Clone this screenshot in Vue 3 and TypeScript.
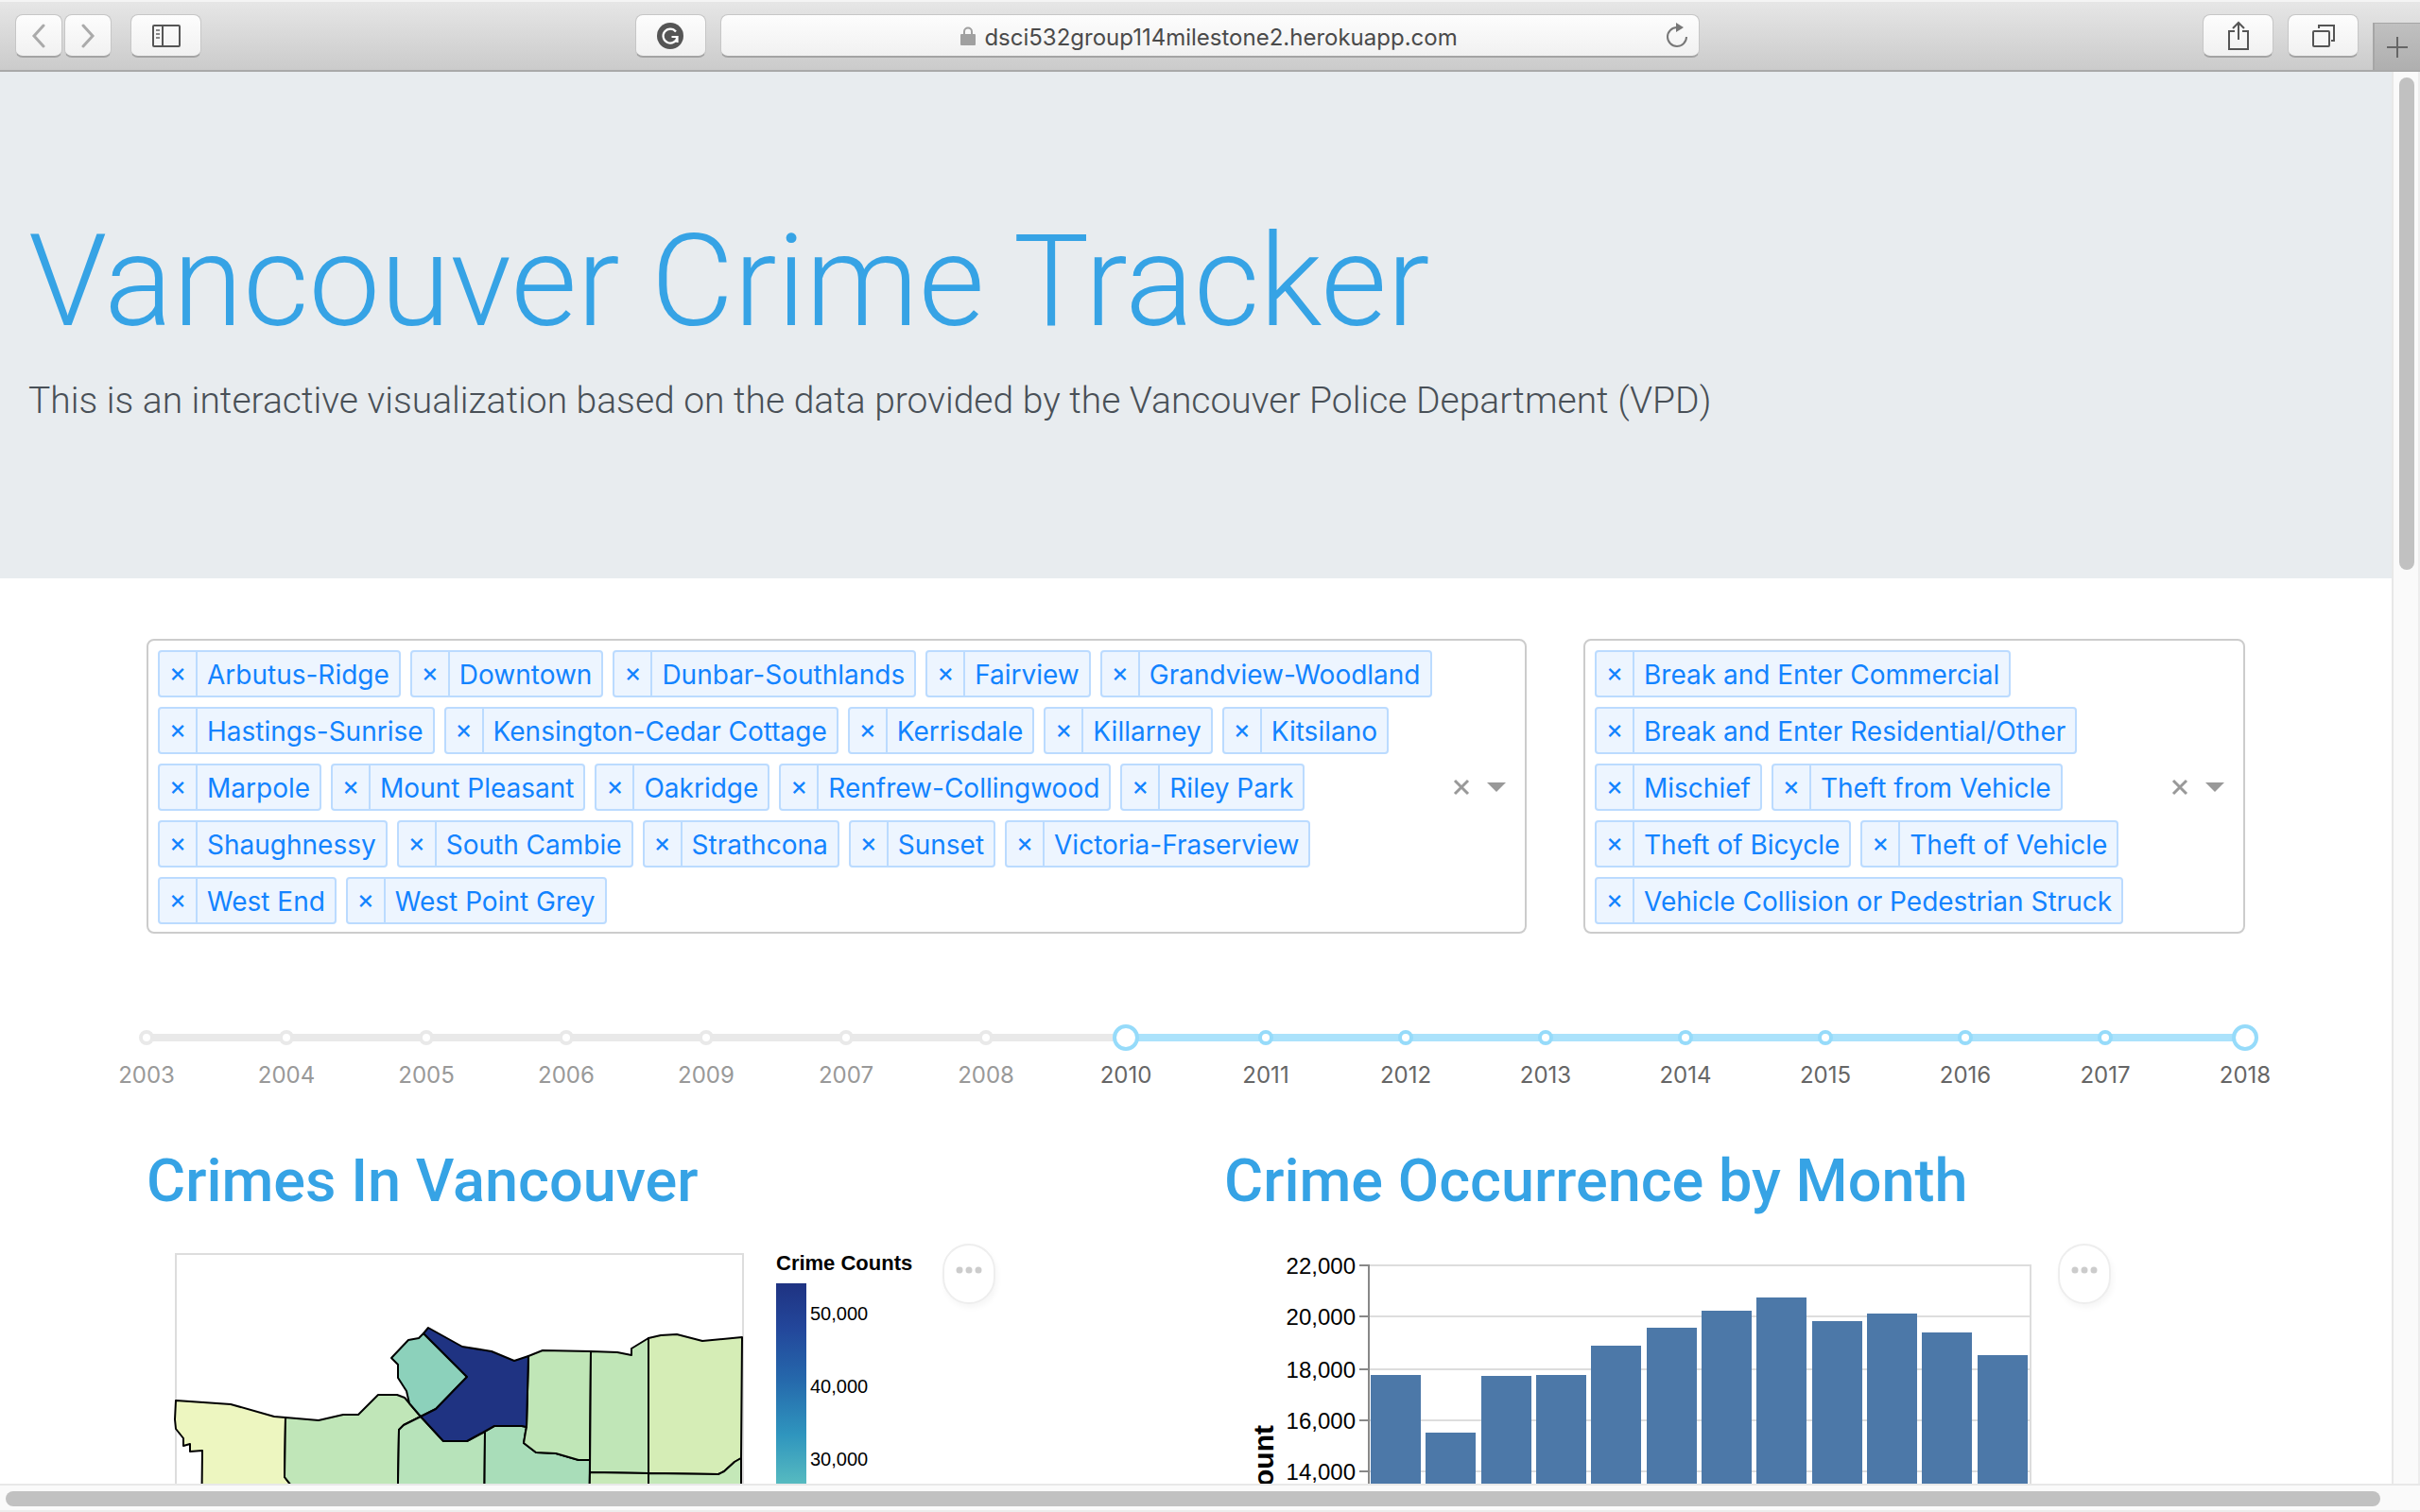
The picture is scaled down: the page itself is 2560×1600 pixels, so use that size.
<script setup lang="ts">
import { computed, ref } from 'vue'

interface Region {
  name: string
  fill: string
  points: string
}

const neighbourhoods = ref<string[]>([
  'Arbutus-Ridge', 'Downtown', 'Dunbar-Southlands', 'Fairview', 'Grandview-Woodland',
  'Hastings-Sunrise', 'Kensington-Cedar Cottage', 'Kerrisdale', 'Killarney', 'Kitsilano',
  'Marpole', 'Mount Pleasant', 'Oakridge', 'Renfrew-Collingwood', 'Riley Park',
  'Shaughnessy', 'South Cambie', 'Strathcona', 'Sunset', 'Victoria-Fraserview',
  'West End', 'West Point Grey',
])

const crimeTypes = ref<string[]>([
  'Break and Enter Commercial', 'Break and Enter Residential/Other', 'Mischief',
  'Theft from Vehicle', 'Theft of Bicycle', 'Theft of Vehicle',
  'Vehicle Collision or Pedestrian Struck',
])

const filters = [
  { id: 'neighbourhoods', label: 'Neighbourhoods', items: neighbourhoods },
  { id: 'crimes', label: 'Crime types', items: crimeTypes },
]

function remove(list: { value: string[] }, item: string) {
  list.value = list.value.filter((x) => x !== item)
}

const years = [2003, 2004, 2005, 2006, 2009, 2007, 2008, 2010, 2011, 2012, 2013, 2014, 2015, 2016, 2017, 2018]
const from = ref(7)
const to = ref(15)
const trackStyle = computed(() => ({
  left: `${(from.value / 15) * 100}%`,
  width: `${((to.value - from.value) / 15) * 100}%`,
}))
const inRange = (i: number) => i >= from.value && i <= to.value

const regions: Region[] = [
  { name: 'West Point Grey', fill: '#edf6c0', points: '1,156 59,160 105,173 117,174 116,237 123,246 123,300 28,300 29,209 16,210 16,202 9,204 9,196 1,186 0,176' },
  { name: 'Kitsilano', fill: '#c0e6b8', points: '117,174 152,177 178,171 194,171 215,150 235,150 243,153 260,173 242,182 237,187 235,300 160,300 123,246 116,237' },
  { name: 'Fairview', fill: '#b7e3ba', points: '260,173 284,199 309,199 328,189 327,300 235,300 237,187 242,182' },
  { name: 'Mount Pleasant', fill: '#a9ddb9', points: '328,189 338,183 367,183 372,184 371,189 369,201 382,211 403,212 427,219 439,219 438,300 327,300' },
  { name: 'Strathcona', fill: '#c0e6b7', points: '374,109 389,103 440,104 439,219 427,219 403,212 382,211 369,201 371,189 372,184' },
  { name: 'Grandview-Woodland', fill: '#c0e6b7', points: '440,104 468,105 483,108 483,101 501,90 501,233 439,232' },
  { name: 'Hastings-Sunrise', fill: '#d5edb6', points: '501,90 514,87 531,86 558,93 600,89 599,217 592,221 581,231 575,234 501,233' },
  { name: 'Kensington-Cedar Cottage', fill: '#c7e9b8', points: '439,232 501,233 501,300 438,300' },
  { name: 'Renfrew-Collingwood', fill: '#c4e8b8', points: '501,233 575,234 581,231 592,221 599,217 599,300 501,300' },
  { name: 'West End', fill: '#8cd1bb', points: '263,85 258,90 247,92 229,111 236,118 236,132 245,146 248,159 260,173 276,165 309,131' },
  { name: 'Downtown', fill: '#1f3382', points: '268,79 304,99 335,104 359,114 374,109 372,184 367,183 338,183 309,199 284,199 260,173 276,165 309,131 263,85' },
]

const legendTicks = [
  { label: '50,000', y: 71 },
  { label: '40,000', y: 148 },
  { label: '30,000', y: 225 },
]

const monthTicks = [
  { label: '22,000', y: 27 },
  { label: '20,000', y: 81 },
  { label: '18,000', y: 137 },
  { label: '16,000', y: 191 },
  { label: '14,000', y: 245 },
]
const barTops = [143, 204, 144, 143, 112, 93, 75, 61, 86, 78, 98, 122]
const barX = (i: number) => 155 + Math.round((i * 175) / 3)
</script>

<template>
  <div class="browser">
    <header class="toolbar">
      <div class="nav">
        <button class="tool narrow" aria-label="Back">
          <svg width="16" height="26" viewBox="0 0 16 26"><path d="M13 2 3 13l10 11" class="chev" /></svg>
        </button>
        <button class="tool narrow" aria-label="Forward">
          <svg width="16" height="26" viewBox="0 0 16 26"><path d="M3 2l10 11L3 24" class="chev" /></svg>
        </button>
      </div>
      <button class="tool sidebar" aria-label="Show sidebar">
        <svg width="30" height="24" viewBox="0 0 30 24" fill="none" stroke="#555" stroke-width="2">
          <rect x="1" y="1" width="28" height="22" rx="1" />
          <path d="M11 1v22" /><path d="M4 6h4M4 10h4M4 14h4" stroke="#888" />
        </svg>
      </button>
      <span class="stretch"></span>
      <button class="tool grammar" aria-label="Grammar check">
        <svg width="28" height="28" viewBox="0 0 28 28">
          <circle cx="14" cy="14" r="14" fill="#555" />
          <path d="M20 9.500A7.500 7.500 0 1 0 21.500 15H15.500M21.500 15v6" fill="none" stroke="#fff" stroke-width="2.200" />
        </svg>
      </button>
      <div class="address">
        <svg width="16" height="20" viewBox="0 0 16 20">
          <path d="M4 9V5.500a4 4 0 0 1 8 0V9" fill="none" stroke="#a0a0a0" stroke-width="2" />
          <rect y="8" width="16" height="12" rx="1" fill="#a0a0a0" />
        </svg>
        <input type="text" value="dsci532group114milestone2.herokuapp.com" aria-label="Address" />
        <button class="reload" aria-label="Reload">
          <svg width="26" height="28" viewBox="0 0 26 28">
            <path d="M13 5A10 10 0 1 0 23 15" fill="none" stroke="#777" stroke-width="2" />
            <path d="M12 0l8 5-8 5z" fill="#777" />
          </svg>
        </button>
      </div>
      <span class="stretch right"></span>
      <button class="tool" aria-label="Share">
        <svg width="24" height="32" viewBox="0 0 24 32" fill="none" stroke="#555" stroke-width="2">
          <path d="M8 11H2v19h20V11h-6M12 20V2M6 8l6-6 6 6" />
        </svg>
      </button>
      <button class="tool tabs" aria-label="Show all tabs">
        <svg width="26" height="26" viewBox="0 0 26 26" fill="none" stroke="#555" stroke-width="2">
          <rect x="2" y="8" width="17" height="16" rx="1" /><path d="M8 5V2h16v16h-3" />
        </svg>
      </button>
      <button class="newtab" aria-label="New tab">
        <svg width="22" height="22" viewBox="0 0 22 22"><path d="M11 0v22M0 11h22" stroke="#666" stroke-width="2" /></svg>
      </button>
    </header>

    <div class="window">
      <main class="page">
        <section class="hero">
          <h1>Vancouver Crime Tracker</h1>
          <p>This is an interactive visualization based on the data provided by the Vancouver Police Department (VPD)</p>
        </section>

        <div class="container">
          <div class="filters">
            <div v-for="f in filters" :key="f.id" class="select" role="group" :aria-label="f.label">
              <ul class="tags">
                <li v-for="item in f.items.value" :key="item" class="tag">
                  <button :aria-label="`Remove ${item}`" @click="remove(f.items, item)">×</button>
                  <span>{{ item }}</span>
                </li>
              </ul>
              <button class="clear" aria-label="Clear all" @click="f.items.value = []">
                <svg width="18" height="18" viewBox="0 0 18 18"><path d="M2 2l14 14M16 2 2 16" stroke="#999" stroke-width="3" /></svg>
              </button>
              <button class="open" aria-label="Open list">
                <svg width="20" height="10" viewBox="0 0 20 10"><path d="M0 0h20L10 10z" fill="#999" /></svg>
              </button>
            </div>
          </div>

          <div class="slider">
            <div class="rail"><div class="track" :style="trackStyle"></div></div>
            <div class="marks">
              <div v-for="(y, i) in years" :key="y" class="mark" :class="{ active: inRange(i) }">
                <i class="dot"></i>
                <span>{{ y }}</span>
              </div>
            </div>
            <input v-model.number="from" type="range" min="0" max="15" aria-label="First year" />
            <input v-model.number="to" type="range" min="0" max="15" aria-label="Last year" />
          </div>

          <div class="charts">
            <section>
              <h2>Crimes In Vancouver</h2>
              <div class="chart">
                <svg width="842" height="400" viewBox="-30 -14 842 400">
                  <rect x="1" y="1" width="600" height="600" fill="#fff" stroke="#ddd" stroke-width="2" />
                  <g stroke="#000" stroke-width="2" stroke-linejoin="round">
                    <polygon v-for="r in regions" :key="r.name" :points="r.points" :fill="r.fill"><title>{{ r.name }}</title></polygon>
                  </g>
                  <defs>
                    <linearGradient id="ramp" x1="0" y1="0" x2="0" y2="1">
                      <stop offset="0" stop-color="#1f3382" />
                      <stop offset="0.120" stop-color="#23479b" />
                      <stop offset="0.250" stop-color="#2567ab" />
                      <stop offset="0.400" stop-color="#2f95be" />
                      <stop offset="0.525" stop-color="#55b9c0" />
                      <stop offset="1" stop-color="#edf8c0" />
                    </linearGradient>
                  </defs>
                  <text x="636" y="18" class="legend-title">Crime Counts</text>
                  <rect x="636" y="32" width="32" height="400" fill="url(#ramp)" />
                  <text v-for="t in legendTicks" :key="t.label" x="672" :y="t.y" class="legend-label">{{ t.label }}</text>
                </svg>
                <button class="more" aria-label="Chart actions">
                  <svg width="28" height="8" viewBox="0 0 28 8" fill="#ccc"><circle cx="4" cy="4" r="3.500" /><circle cx="14" cy="4" r="3.500" /><circle cx="24" cy="4" r="3.500" /></svg>
                </button>
              </div>
            </section>
            <section>
              <h2>Crime Occurrence by Month</h2>
              <div class="chart">
                <svg width="882" height="400" viewBox="0 0 882 400">
                  <rect x="153" y="27" width="700" height="600" fill="#fff" stroke="#ddd" stroke-width="2" />
                  <g v-for="t in monthTicks" :key="t.label">
                    <path :d="`M153 ${t.y}h700`" stroke="#ddd" stroke-width="2" />
                    <path :d="`M143 ${t.y}h10`" stroke="#888" stroke-width="2" />
                    <text x="139" :y="t.y + 9" class="axis-label">{{ t.label }}</text>
                  </g>
                  <rect v-for="(top, i) in barTops" :key="i" :x="barX(i)" :y="top" width="53" :height="600 - top" fill="#4c78a8" />
                  <path d="M153 26v400" stroke="#888" stroke-width="2" />
                  <text transform="translate(52 196) rotate(-90)" class="axis-title">Count</text>
                </svg>
                <button class="more" aria-label="Chart actions">
                  <svg width="28" height="8" viewBox="0 0 28 8" fill="#ccc"><circle cx="4" cy="4" r="3.500" /><circle cx="14" cy="4" r="3.500" /><circle cx="24" cy="4" r="3.500" /></svg>
                </button>
              </div>
            </section>
          </div>
        </div>
      </main>
      <div class="vbar"><div class="vthumb"></div></div>
      <div class="hbar"><div class="hthumb"></div></div>
    </div>
  </div>
</template>

<style>
body {
  margin: 0;
  overflow: hidden;
}
</style>

<style scoped>
* {
  box-sizing: border-box;
}
.browser {
  display: flex;
  flex-direction: column;
  height: 100vh;
  background: #fff;
  color: #212529;
  font-family: Inter, "Liberation Sans", sans-serif;
}
button {
  display: flex;
  align-items: center;
  justify-content: center;
  padding: 0;
  border: 0;
  background: none;
  font: inherit;
}
.toolbar {
  display: flex;
  align-items: center;
  flex: none;
  height: 76px;
  padding-left: 16px;
  border-top: 2px solid #f4f4f4;
  border-bottom: 2px solid #a9a9a9;
  background: linear-gradient(#e6e6e6, #cbcbcb);
}
.nav {
  display: flex;
  gap: 2px;
  margin-right: 20px;
}
.tool,
.address {
  height: 46px;
  border: 1px solid #c6c6c6;
  border-bottom: 2px solid #a4a4a4;
  border-radius: 8px;
  background: linear-gradient(#fdfdfd, #f1f1f1);
}
.tool {
  width: 75px;
}
.tool.narrow {
  width: 50px;
}
.chev {
  fill: none;
  stroke: #aaa;
  stroke-width: 3;
  stroke-linecap: round;
}
.stretch {
  flex: 459;
}
.stretch.right {
  flex: 533;
}
.grammar {
  margin-right: 15px;
}
.address {
  position: relative;
  display: flex;
  align-items: center;
  justify-content: center;
  gap: 8px;
  width: 1036px;
}
.address input {
  width: 504px;
  height: 42px;
  padding: 4px 0 0;
  border: 0;
  outline: 0;
  background: none;
  color: #4a4a4a;
  font: 24px Inter, "Liberation Sans", sans-serif;
  text-align: center;
}
.reload {
  position: absolute;
  right: 10px;
}
.tabs {
  margin-left: 15px;
}
.newtab {
  align-self: flex-end;
  width: 50px;
  height: 50px;
  margin-left: 15px;
  border-top: 1px solid #a6a6a6;
  border-left: 2px solid #a6a6a6;
  background: linear-gradient(#c0c0c0, #afafaf);
}
.window {
  display: grid;
  flex: 1;
  grid-template-columns: minmax(0, 1fr) 30px;
  grid-template-rows: minmax(0, 1fr) 30px;
  min-height: 0;
}
.page {
  overflow: hidden;
}
.vbar {
  padding: 6px 4px 0 6px;
  border-left: 2px solid #e8e8e8;
  border-right: 2px solid #ededed;
  background: #fafafa;
}
.vthumb {
  width: 16px;
  height: 35%;
  border-radius: 8px;
  background: #c1c1c1;
}
.hbar {
  grid-column: 1 / 3;
  padding: 6px 42px 0 6px;
  border-top: 2px solid #e8e8e8;
  border-bottom: 2px solid #ededed;
  background: #fafafa;
}
.hthumb {
  height: 16px;
  border-radius: 8px;
  background: #c1c1c1;
}
.hero {
  padding: 136px 30px 158px;
  background: #e8ecef;
}
h1,
h2,
p {
  margin: 0;
  font-family: Roboto, Inter, sans-serif;
}
h1 {
  color: #36a3e5;
  font-size: 135px;
  font-weight: 300;
  line-height: 172px;
}
.hero p {
  margin-top: 10px;
  color: #495057;
  font-size: 39px;
  font-weight: 300;
  line-height: 60px;
}
.container {
  max-width: 2280px;
  margin: 0 auto;
  padding: 64px 30px 0;
}
.filters {
  display: grid;
  grid-template-columns: minmax(0, 73fr) minmax(0, 35fr);
  gap: 60px;
}
.select {
  display: flex;
  align-items: center;
  padding: 10px 20px 8px 10px;
  border: 2px solid #ccc;
  border-radius: 8px;
}
.tags {
  display: flex;
  flex: 1;
  flex-wrap: wrap;
  align-self: flex-start;
  gap: 10px;
  margin: 0;
  padding: 0;
  list-style: none;
}
.tag {
  display: flex;
  height: 50px;
  border: 2px solid #bbdbff;
  border-radius: 4px;
  background: #edf5ff;
  color: #1283ff;
  font-size: 28px;
  line-height: 48px;
}
.tag button {
  width: 40px;
  padding-bottom: 4px;
  border-right: 2px solid #bbdbff;
  color: #1283ff;
}
.tag span {
  padding: 0 10px;
  white-space: nowrap;
}
.clear {
  margin-right: 18px;
}
.slider {
  position: relative;
  height: 64px;
  margin-top: 96px;
}
.rail {
  position: absolute;
  top: 10px;
  right: 0;
  left: 0;
  height: 8px;
  border-radius: 4px;
  background: #e9e9e9;
}
.track {
  position: absolute;
  height: 8px;
  background: #abe2fb;
}
.marks {
  position: relative;
  display: flex;
  justify-content: space-between;
  padding-top: 6px;
}
.mark {
  display: flex;
  flex-direction: column;
  align-items: center;
  gap: 18px;
  width: 0;
  color: #999;
  font-size: 24px;
  line-height: 28px;
}
.mark.active {
  color: #666;
}
.dot {
  width: 16px;
  height: 16px;
  flex: none;
  border: 4px solid #e9e9e9;
  border-radius: 50%;
  background: #fff;
}
.active .dot {
  border-color: #96dbfa;
}
.slider input {
  position: absolute;
  top: 0;
  left: -14px;
  width: calc(100% + 28px);
  height: 28px;
  margin: 0;
  appearance: none;
  background: none;
  pointer-events: none;
}
.slider input::-webkit-slider-thumb {
  width: 28px;
  height: 28px;
  border: 4px solid #96dbfa;
  border-radius: 50%;
  appearance: none;
  background: #fff;
  pointer-events: auto;
}
.charts {
  display: grid;
  grid-template-columns: minmax(0, 1fr) minmax(0, 1fr);
  gap: 60px;
  margin-top: 64px;
}
h2 {
  color: #36a3e5;
  font-size: 63px;
  font-weight: 500;
  line-height: 76px;
}
.chart {
  display: flex;
  align-items: flex-start;
  margin-top: 24px;
}
.chart text {
  font-family: "Liberation Sans", Arial, sans-serif;
}
.legend-title {
  font-size: 22px;
  font-weight: 700;
}
.legend-label {
  font-size: 20px;
}
.axis-label {
  font-size: 24px;
  text-anchor: end;
}
.axis-title {
  font-size: 30px;
  font-weight: 700;
  text-anchor: end;
}
.more {
  align-items: flex-start;
  width: 56px;
  height: 64px;
  margin-top: 4px;
  padding-top: 22px;
  border: 2px solid #eee;
  border-radius: 28px;
  background: #fff;
  box-shadow: 2px 4px 6px #f6f6f6;
}
</style>
